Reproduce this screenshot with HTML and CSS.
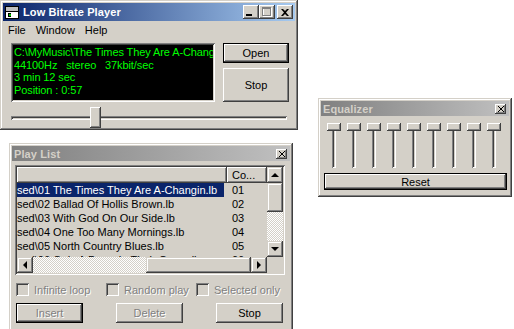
FILE: index.html
```html
<!DOCTYPE html>
<html lang="en">

<head>
  <meta charset="UTF-8">
  <title>Low Bitrate Player</title>
  <link rel="stylesheet" href="styles.css">
</head>

<body>
  <div class="desktop">

    <!-- Ventana principal del reproductor -->
    <div class="win main-win">
      <div class="caption">
        <svg class="app-icon" width="16" height="16" viewBox="0 0 16 16" shape-rendering="crispEdges">
          <rect x="1.5" y="2.5" width="13" height="12" fill="#fff" stroke="#000" />
          <rect x="2" y="3" width="12" height="4" fill="#c0c0c0" />
          <rect x="1" y="7" width="14" height="1" fill="#000" />
          <rect x="4" y="9" width="3" height="4" fill="#000" />
          <rect x="5" y="10" width="2" height="2" fill="#00c000" />
        </svg>
        <span class="caption-text">Low Bitrate Player</span>
        <div class="cap-buttons">
          <span class="cap-btn">
            <svg width="6" height="2"><rect width="6" height="2" fill="#000" /></svg>
          </span>
          <span class="cap-btn">
            <svg width="10" height="10" shape-rendering="crispEdges">
              <rect x="1.5" y="1.5" width="8" height="8" fill="none" stroke="#fff" />
              <rect x="0.5" y="0.5" width="8" height="8" fill="none" stroke="#808080" />
              <rect x="1" y="1" width="7" height="1" fill="#808080" />
            </svg>
          </span>
          <span class="cap-btn close">
            <svg width="8" height="7" viewBox="0 0 8 7">
              <path d="M0 0h2l2 2 2-2h2l-3 3.5 3 3.5h-2l-2-2-2 2h-2l3-3.5z" fill="#000" />
            </svg>
          </span>
        </div>
      </div>
      <div class="menubar">
        <span class="menu-item">File</span>
        <span class="menu-item">Window</span>
        <span class="menu-item">Help</span>
      </div>
      <div class="player">
        <div class="display">
          <div class="line">C:\MyMusic\The Times They Are A-Changin.lb</div>
          <div class="line">44100Hz &nbsp;&nbsp;stereo &nbsp;&nbsp;37kbit/sec</div>
          <div class="line">3 min 12 sec</div>
          <div class="line">Position : 0:57</div>
        </div>
        <div class="player-buttons">
          <div class="btn default btn-open">Open</div>
          <div class="btn btn-stop">Stop</div>
        </div>
      </div>
      <div class="seek">
        <div class="seek-track"></div>
        <div class="seek-thumb" style="left: 79px"></div>
      </div>
    </div>

    <!-- Ecualizador -->
    <div class="win eq-win">
      <div class="caption small inactive">
        <span class="caption-text">Equalizer</span>
        <span class="tool-close">
          <svg width="6" height="6" viewBox="0 0 6 6" shape-rendering="crispEdges">
            <path d="M0 0h1v1h-1zM5 0h1v1h-1zM1 1h1v1h-1zM4 1h1v1h-1zM2 2h2v2h-2zM1 4h1v1h-1zM4 4h1v1h-1zM0 5h1v1h-1zM5 5h1v1h-1z" fill="#000" />
          </svg>
        </span>
      </div>
      <div class="bands">
        <div class="band"><div class="band-track"></div><div class="band-thumb"></div></div>
        <div class="band"><div class="band-track"></div><div class="band-thumb"></div></div>
        <div class="band"><div class="band-track"></div><div class="band-thumb"></div></div>
        <div class="band"><div class="band-track"></div><div class="band-thumb"></div></div>
        <div class="band"><div class="band-track"></div><div class="band-thumb"></div></div>
        <div class="band"><div class="band-track"></div><div class="band-thumb"></div></div>
        <div class="band"><div class="band-track"></div><div class="band-thumb"></div></div>
        <div class="band"><div class="band-track"></div><div class="band-thumb"></div></div>
        <div class="band"><div class="band-track"></div><div class="band-thumb"></div></div>
      </div>
      <div class="btn default btn-reset">Reset</div>
    </div>

    <!-- Lista de reproduccion -->
    <div class="win playlist-win">
      <div class="caption small inactive">
        <span class="caption-text">Play List</span>
        <span class="tool-close">
          <svg width="6" height="6" viewBox="0 0 6 6" shape-rendering="crispEdges">
            <path d="M0 0h1v1h-1zM5 0h1v1h-1zM1 1h1v1h-1zM4 1h1v1h-1zM2 2h2v2h-2zM1 4h1v1h-1zM4 4h1v1h-1zM0 5h1v1h-1zM5 5h1v1h-1z" fill="#000" />
          </svg>
        </span>
      </div>

      <div class="listview">
        <div class="lv-body">
          <div class="lv-header">
            <div class="lv-head c1"></div>
            <div class="lv-head c2">Co...</div>
          </div>
          <div class="lv-row">
            <div class="c1"><span class="sel">sed\01 The Times They Are A-Changin.lb</span></div>
            <div class="c2">01</div>
          </div>
          <div class="lv-row">
            <div class="c1">sed\02 Ballad Of Hollis Brown.lb</div>
            <div class="c2">02</div>
          </div>
          <div class="lv-row">
            <div class="c1">sed\03 With God On Our Side.lb</div>
            <div class="c2">03</div>
          </div>
          <div class="lv-row">
            <div class="c1">sed\04 One Too Many Mornings.lb</div>
            <div class="c2">04</div>
          </div>
          <div class="lv-row">
            <div class="c1">sed\05 North Country Blues.lb</div>
            <div class="c2">05</div>
          </div>
          <div class="lv-row">
            <div class="c1">sed\06 Only A Pawn In Their Game.lb</div>
            <div class="c2">06</div>
          </div>
        </div>
        <div class="vscroll">
          <div class="sb-btn"><span class="arrow up"></span></div>
          <div class="sb-thumb v"></div>
          <div class="sb-track"></div>
          <div class="sb-btn"><span class="arrow down"></span></div>
        </div>
        <div class="hscroll">
          <div class="sb-btn"><span class="arrow left"></span></div>
          <div class="sb-track h"></div>
          <div class="sb-thumb h"></div>
          <div class="sb-btn"><span class="arrow right"></span></div>
        </div>
        <div class="sb-corner"></div>
      </div>

      <div class="options">
        <label class="check"><span class="check-box"></span><span class="disabled">Infinite loop</span></label>
        <label class="check"><span class="check-box"></span><span class="disabled">Random play</span></label>
        <label class="check"><span class="check-box"></span><span class="disabled">Selected only</span></label>
      </div>

      <div class="pl-buttons">
        <div class="btn default"><span class="disabled">Insert</span></div>
        <div class="btn"><span class="disabled">Delete</span></div>
        <div class="btn">Stop</div>
      </div>
    </div>

  </div>
</body>

</html>
```

FILE: styles.css
```css
* {
  box-sizing: border-box;
}

body {
  margin: 0;
  background: #fff;
  font-family: "Liberation Sans", Arial, sans-serif;
  font-size: 11px;
  color: #000;
}

.desktop {
  position: relative;
  width: 514px;
  height: 329px;
  overflow: hidden;
}

/* Marco de ventana clasico */
.win {
  position: absolute;
  background: #d4d0c8;
  padding: 3px;
  box-shadow: inset -1px -1px #404040, inset 1px 1px #d4d0c8,
    inset -2px -2px #808080, inset 2px 2px #fff;
}

.main-win {
  left: 0;
  top: 0;
  width: 298px;
  height: 130px;
}

.playlist-win {
  left: 9px;
  top: 143px;
  width: 284px;
  height: 190px;
}

.eq-win {
  left: 318px;
  top: 98px;
  width: 194px;
  height: 99px;
}

/* Barra de titulo */
.caption {
  display: flex;
  align-items: center;
  height: 18px;
  padding: 0 2px 0 1px;
  background: linear-gradient(to right, #0a246a, #a6caf0);
  color: #fff;
}

.caption.small {
  height: 15px;
  padding: 0 3px 0 2px;
}

.caption.inactive {
  background: linear-gradient(to right, #808080, #c0c0c0);
  color: #d4d0c8;
}

.caption-text {
  font-weight: bold;
  font-size: 11px;
  letter-spacing: 0.1px;
  white-space: nowrap;
}

.app-icon {
  margin-right: 3px;
}

.cap-buttons {
  display: flex;
  margin-left: auto;
}

.cap-btn {
  display: flex;
  align-items: center;
  justify-content: center;
  width: 16px;
  height: 14px;
  background: #d4d0c8;
  box-shadow: inset -1px -1px #404040, inset 1px 1px #fff,
    inset -2px -2px #808080, inset 2px 2px #d4d0c8;
}

.cap-btn:first-child svg {
  margin: 6px 4px 0 0;
}

.cap-btn.close {
  margin-left: 2px;
}

.tool-close {
  display: flex;
  align-items: center;
  justify-content: center;
  width: 11px;
  height: 10px;
  margin-left: auto;
  background: #d4d0c8;
  box-shadow: inset -1px -1px #404040, inset 1px 1px #fff,
    inset -2px -2px #808080;
}

/* Menu */
.menubar {
  display: flex;
  height: 19px;
  line-height: 19px;
}

.menu-item {
  padding: 0 5px;
}

/* Pantalla y botones */
.player {
  display: flex;
  gap: 8px;
  padding: 3px 6px 0 8px;
}

.display {
  width: 204px;
  height: 59px;
  padding: 3px 2px 0 3px;
  background: #000;
  color: #00ff00;
  font-size: 11px;
  line-height: 12.7px;
  letter-spacing: -0.1px;
  box-shadow: inset 1px 1px #808080, inset -1px -1px #fff,
    inset 2px 2px #404040, inset -2px -2px #d4d0c8;
}

.display .line {
  white-space: nowrap;
  overflow: hidden;
  text-overflow: clip;
}

.player-buttons {
  display: flex;
  flex-direction: column;
  gap: 5px;
  width: 66px;
}

.btn {
  display: flex;
  align-items: center;
  justify-content: center;
  background: #d4d0c8;
  font-size: 11px;
  box-shadow: inset -1px -1px #404040, inset 1px 1px #fff,
    inset -2px -2px #808080, inset 2px 2px #d4d0c8;
}

.btn.default {
  border: 1px solid #000;
}

.btn-open {
  height: 20px;
}

.btn-stop {
  height: 34px;
}

.disabled {
  color: #808080;
  text-shadow: 1px 1px #fff;
}

/* Barra de posicion */
.seek {
  position: relative;
  display: flex;
  align-items: center;
  height: 21px;
  margin: 5px 8px 0 8px;
}

.seek-track {
  width: 100%;
  height: 4px;
  box-shadow: inset 1px 1px #808080, inset -1px -1px #fff,
    inset 2px 2px #404040;
}

.seek-thumb {
  position: absolute;
  top: 0;
  width: 11px;
  height: 21px;
  background: #d4d0c8;
  box-shadow: inset -1px -1px #404040, inset 1px 1px #fff,
    inset -2px -2px #808080;
}

/* Ecualizador */
.bands {
  display: flex;
  gap: 6px;
  margin: 7px 0 0 6px;
}

.band {
  position: relative;
  width: 14px;
  height: 45px;
}

.band-track {
  width: 4px;
  height: 100%;
  margin: 0 auto;
  box-shadow: inset 1px 1px #808080, inset -1px -1px #fff,
    inset 2px 2px #404040;
}

.band-thumb {
  position: absolute;
  top: 0;
  left: 0;
  width: 14px;
  height: 8px;
  background: #d4d0c8;
  box-shadow: inset -1px -1px #404040, inset 1px 1px #fff,
    inset -2px -2px #808080;
}

.btn-reset {
  width: 183px;
  height: 17px;
  margin: 5px 0 0 3px;
}

/* Lista */
.listview {
  display: grid;
  grid-template-columns: 250px 16px;
  grid-template-rows: 90px 16px;
  width: 270px;
  height: 110px;
  margin: 4px 0 0 3px;
  padding: 2px;
  background: #d4d0c8;
  box-shadow: inset 1px 1px #808080, inset -1px -1px #fff,
    inset 2px 2px #404040, inset -2px -2px #d4d0c8;
}

.lv-body {
  overflow: hidden;
}

.lv-header,
.lv-row {
  display: flex;
}

.lv-header {
  height: 16px;
}

.lv-head {
  height: 16px;
  line-height: 16px;
  box-shadow: inset -1px -1px #404040, inset 1px 1px #fff,
    inset -2px -2px #808080;
}

.c1 {
  width: 210px;
  overflow: hidden;
  white-space: nowrap;
}

.c2 {
  width: 40px;
  padding-left: 5px;
  white-space: nowrap;
  overflow: hidden;
}

.lv-row {
  height: 14px;
  line-height: 14px;
}

.sel {
  display: inline-block;
  padding-right: 7px;
  background: #0a246a;
  color: #fff;
}

.vscroll {
  display: flex;
  flex-direction: column;
}

.hscroll {
  display: flex;
}

.sb-btn {
  display: flex;
  align-items: center;
  justify-content: center;
  width: 16px;
  height: 16px;
  flex-shrink: 0;
  background: #d4d0c8;
  box-shadow: inset -1px -1px #404040, inset 1px 1px #d4d0c8,
    inset -2px -2px #808080, inset 2px 2px #fff;
}

.sb-thumb {
  background: #d4d0c8;
  box-shadow: inset -1px -1px #404040, inset 1px 1px #d4d0c8,
    inset -2px -2px #808080, inset 2px 2px #fff;
}

.sb-thumb.v {
  height: 29px;
}

.sb-thumb.h {
  flex: 1;
}

.sb-track {
  flex: 1;
  background: repeating-conic-gradient(#fff 0 25%, #d4d0c8 0 50%) 0 0 / 2px 2px;
}

.sb-track.h {
  flex: 0 0 113px;
}

.sb-corner {
  background: #d4d0c8;
}

.arrow {
  width: 0;
  height: 0;
  border: 4px solid transparent;
}

.arrow.up {
  border-bottom-color: #000;
  border-top-width: 0;
}

.arrow.down {
  border-top-color: #000;
  border-bottom-width: 0;
}

.arrow.left {
  border-right-color: #000;
  border-left-width: 0;
}

.arrow.right {
  border-left-color: #000;
  border-right-width: 0;
}

/* Opciones */
.options {
  display: grid;
  grid-template-columns: repeat(3, 90px);
  margin: 8px 0 0 4px;
}

.check {
  display: flex;
  align-items: center;
  gap: 5px;
  height: 13px;
  white-space: nowrap;
}

.check-box {
  width: 13px;
  height: 13px;
  box-shadow: inset 1px 1px #808080, inset -1px -1px #fff,
    inset 2px 2px #404040, inset -2px -2px #d4d0c8;
}

.pl-buttons {
  display: grid;
  grid-template-columns: repeat(3, 100px);
  margin: 7px 0 0 4px;
}

.pl-buttons .btn {
  width: 67px;
  height: 20px;
}
```
